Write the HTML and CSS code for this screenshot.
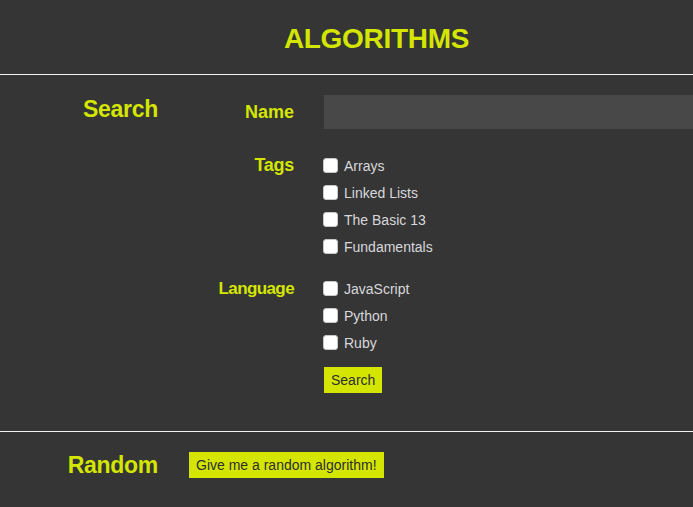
FILE: index.html
```html
<!DOCTYPE html>
<html>
<head>
<meta charset="utf-8">
<link rel="stylesheet" href="styles.css">
</head>
<body>
<header class="top">
  <h1 class="title">ALGORITHMS</h1>
</header>
<section class="search">
  <h2 class="section-label search-label">Search</h2>
  <form class="form">
    <div class="field">
      <label class="field-label name-label" for="name">Name</label>
      <input class="text-input" id="name" type="text">
    </div>
    <div class="field group tags">
      <span class="field-label">Tags</span>
      <div class="options">
        <label class="option"><input class="check" type="checkbox"><span>Arrays</span></label>
        <label class="option"><input class="check" type="checkbox"><span>Linked Lists</span></label>
        <label class="option"><input class="check" type="checkbox"><span>The Basic 13</span></label>
        <label class="option"><input class="check" type="checkbox"><span>Fundamentals</span></label>
      </div>
    </div>
    <div class="field group langs">
      <span class="field-label lang-label">Language</span>
      <div class="options">
        <label class="option"><input class="check" type="checkbox"><span>JavaScript</span></label>
        <label class="option"><input class="check" type="checkbox"><span>Python</span></label>
        <label class="option"><input class="check" type="checkbox"><span>Ruby</span></label>
      </div>
    </div>
    <div class="field submit-row">
      <span></span>
      <div><button class="btn" type="button">Search</button></div>
    </div>
  </form>
</section>
<section class="random">
  <h2 class="section-label random-label">Random</h2>
  <button class="btn" type="button">Give me a random algorithm!</button>
</section>
</body>
</html>
```

FILE: styles.css
```css
* { box-sizing: border-box; }
html, body {
  margin: 0;
  padding: 0;
  background: #353535;
  font-family: "Liberation Sans", Arial, Helvetica, sans-serif;
}
.top {
  height: 75px;
  border-bottom: 1px solid #f2f2f2;
  display: flex;
  align-items: center;
  justify-content: center;
  padding: 4px 0 0 60px;
}
.title {
  margin: 0;
  font-size: 28px;
  font-weight: bold;
  color: #d4e600;
  letter-spacing: -0.3px;
}
.search {
  display: flex;
  padding: 20px 0 38px 0;
  border-bottom: 1px solid #f2f2f2;
}
.section-label {
  width: 158px;
  margin: 0;
  text-align: right;
  font-size: 23px;
  font-weight: bold;
  color: #d4e600;
  letter-spacing: -0.3px;
}
.search-label {
  line-height: 28px;
}
.form {
  flex: 1;
  margin: 0;
}
.field {
  display: grid;
  grid-template-columns: 136px 1fr;
  column-gap: 29px;
}
.field-label {
  text-align: right;
  font-size: 18px;
  font-weight: bold;
  color: #d4e600;
  line-height: 27px;
  letter-spacing: -0.3px;
}
.name-label {
  line-height: 34px;
  letter-spacing: 0;
}
.lang-label {
  font-size: 17px;
  letter-spacing: -0.6px;
}
.text-input {
  height: 34px;
  margin: 0 0 0 1px;
  border: none;
  background: #484848;
  color: #ddd;
  font-size: 14px;
  outline: none;
}
.tags {
  margin-top: 23px;
}
.langs {
  margin-top: 15px;
}
.options {
  display: flex;
  flex-direction: column;
}
.option {
  height: 27px;
  display: flex;
  align-items: center;
  gap: 6px;
  font-size: 14px;
  color: #d8d8dc;
}
.check {
  appearance: none;
  -webkit-appearance: none;
  width: 15px;
  height: 15px;
  margin: 0;
  background: #fff;
  border: 1px solid #c8c8c8;
  border-radius: 3px;
}
.submit-row {
  margin-top: 11px;
}
.btn {
  height: 26px;
  margin: 0 0 0 1px;
  padding: 0 7px;
  border: none;
  background: #d4e600;
  color: #2e2e2e;
  font-family: "Liberation Sans", Arial, Helvetica, sans-serif;
  font-size: 14px;
}
.random {
  display: flex;
  align-items: center;
  gap: 30px;
  padding-top: 20px;
}
.random-label {
  line-height: 26px;
}
```
